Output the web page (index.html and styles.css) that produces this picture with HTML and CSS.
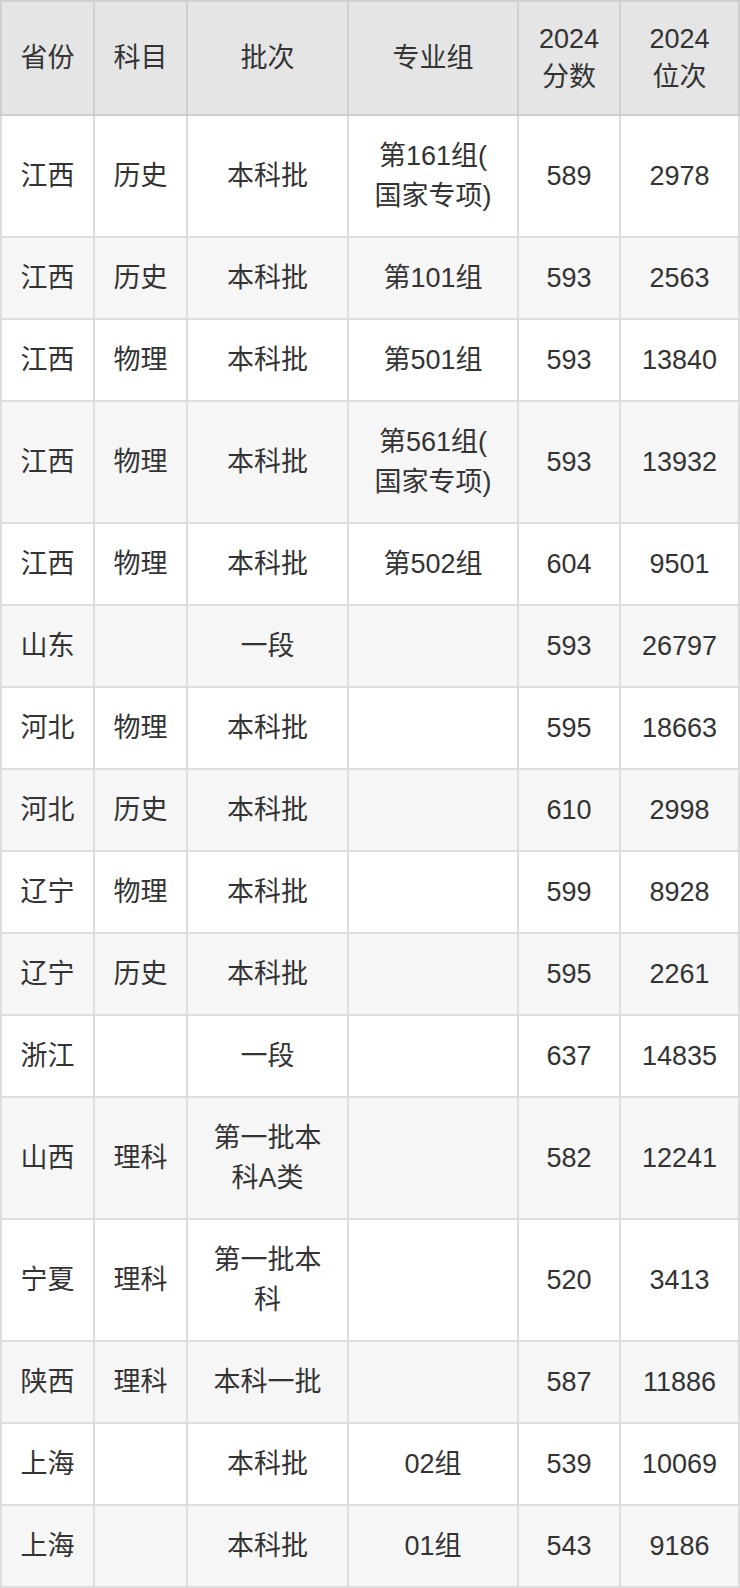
FILE: index.html
```html
<!DOCTYPE html>
<html lang="zh">
<head>
<meta charset="utf-8">
<title>2024 分数位次</title>
<link rel="stylesheet" href="styles.css">
</head>
<body>
<table class="score-table">
  <colgroup>
    <col class="c1"><col class="c2"><col class="c3"><col class="c4"><col class="c5"><col class="c6">
  </colgroup>
  <thead>
    <tr><th>省份</th><th>科目</th><th>批次</th><th>专业组</th><th>2024<br>分数</th><th>2024<br>位次</th></tr>
  </thead>
  <tbody>
    <tr><td>江西</td><td>历史</td><td>本科批</td><td>第161组(<br>国家专项)</td><td>589</td><td>2978</td></tr>
    <tr><td>江西</td><td>历史</td><td>本科批</td><td>第101组</td><td>593</td><td>2563</td></tr>
    <tr><td>江西</td><td>物理</td><td>本科批</td><td>第501组</td><td>593</td><td>13840</td></tr>
    <tr><td>江西</td><td>物理</td><td>本科批</td><td>第561组(<br>国家专项)</td><td>593</td><td>13932</td></tr>
    <tr><td>江西</td><td>物理</td><td>本科批</td><td>第502组</td><td>604</td><td>9501</td></tr>
    <tr><td>山东</td><td></td><td>一段</td><td></td><td>593</td><td>26797</td></tr>
    <tr><td>河北</td><td>物理</td><td>本科批</td><td></td><td>595</td><td>18663</td></tr>
    <tr><td>河北</td><td>历史</td><td>本科批</td><td></td><td>610</td><td>2998</td></tr>
    <tr><td>辽宁</td><td>物理</td><td>本科批</td><td></td><td>599</td><td>8928</td></tr>
    <tr><td>辽宁</td><td>历史</td><td>本科批</td><td></td><td>595</td><td>2261</td></tr>
    <tr><td>浙江</td><td></td><td>一段</td><td></td><td>637</td><td>14835</td></tr>
    <tr><td>山西</td><td>理科</td><td>第一批本<br>科A类</td><td></td><td>582</td><td>12241</td></tr>
    <tr><td>宁夏</td><td>理科</td><td>第一批本<br>科</td><td></td><td>520</td><td>3413</td></tr>
    <tr><td>陕西</td><td>理科</td><td>本科一批</td><td></td><td>587</td><td>11886</td></tr>
    <tr><td>上海</td><td></td><td>本科批</td><td>02组</td><td>539</td><td>10069</td></tr>
    <tr><td>上海</td><td></td><td>本科批</td><td>01组</td><td>543</td><td>9186</td></tr>
  </tbody>
</table>
</body>
</html>
```

FILE: styles.css
```css
html, body {
  margin: 0;
  padding: 0;
  background: #ffffff;
}

body {
  font-family: "Liberation Sans", Arial, "Noto Sans CJK SC", sans-serif;
  font-size: 27px;
  color: #333333;
}

.score-table {
  width: 740px;
  table-layout: fixed;
  border-collapse: collapse;
  border: 2px solid #d4d4d4;
}

.c1 { width: 93px; }
.c2 { width: 93px; }
.c3 { width: 161px; }
.c4 { width: 170px; }
.c5 { width: 102px; }
.c6 { width: 119px; }

.score-table th,
.score-table td {
  text-align: center;
  vertical-align: middle;
  padding: 20px 4px;
  line-height: 40px;
  font-weight: normal;
  white-space: nowrap;
}

.score-table th {
  background: #e5e5e5;
  border: 2px solid #cfcfcf;
  padding-top: 18px;
  padding-bottom: 18px;
  line-height: 38px;
}

.score-table td {
  border: 2px solid #dddddd;
}

.score-table tbody tr:nth-child(even) td {
  background: #f6f6f6;
}
```
